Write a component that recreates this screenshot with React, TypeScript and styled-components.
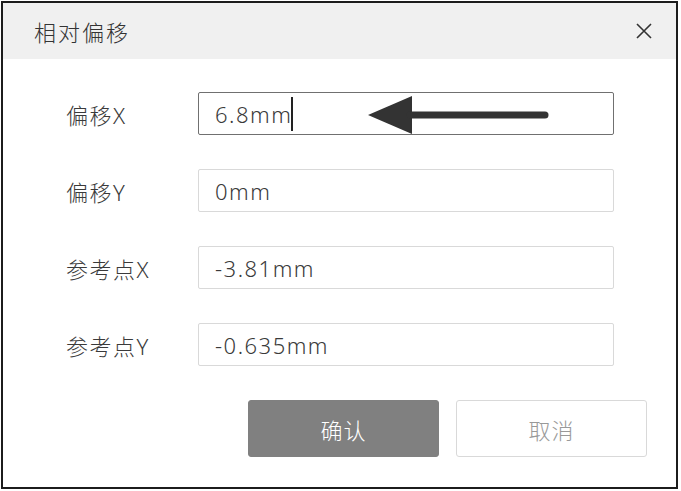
import React from 'react';
import styled, { createGlobalStyle } from 'styled-components';

const GlobalStyle = createGlobalStyle`
  html, body {
    margin: 0;
    padding: 0;
    background: #fff;
  }
  body {
    font-family: "Noto Sans", "Noto Sans CJK SC", sans-serif;
    color: #333;
  }
`;

const Frame = styled.div`
  box-sizing: border-box;
  width: 677px;
  height: 488px;
  margin: 1px 0 0 1px;
  border: 2px solid #1c1c1c;
  display: flex;
  flex-direction: column;
  background: #fff;
`;

const Header = styled.div`
  height: 56px;
  flex: none;
  background: #f0f0f0;
  display: flex;
  align-items: center;
  justify-content: space-between;
  padding: 0 24px 0 31px;
`;

const Title = styled.div`
  font-size: 22px;
  font-weight: 300;
  letter-spacing: 2px;
  color: #333;
`;

const Close = styled.button`
  width: 16px;
  height: 16px;
  padding: 0;
  border: 0;
  background: none;
  display: grid;
  place-content: center;
`;

const Body = styled.div`
  padding: 33px 29px 0 63px;
  display: flex;
  flex-direction: column;
`;

const Form = styled.div`
  display: grid;
  grid-template-columns: 132px 416px;
  grid-auto-rows: 43px;
  row-gap: 34px;
  align-items: center;
`;

const Label = styled.div`
  font-size: 22px;
  font-weight: 300;
  letter-spacing: 1.5px;
  color: #3a3a3a;
`;

const Field = styled.div<{ $focused?: boolean }>`
  position: relative;
  box-sizing: border-box;
  height: 43px;
  border: 1px solid ${(p) => (p.$focused ? '#707070' : '#d9d9d9')};
  border-radius: 2px;
  padding: 0 16px;
  display: flex;
  align-items: center;
  font-size: 22px;
  font-weight: 300;
  letter-spacing: 1.5px;
  color: #3a3a3a;
`;

const Caret = styled.span`
  display: inline-block;
  width: 2px;
  height: 34px;
  background: #222;
  margin-left: -1px;
`;

const Pointer = styled.svg`
  position: absolute;
  left: 168px;
  top: 0;
`;

const Actions = styled.div`
  margin-top: 34px;
  display: flex;
  justify-content: flex-end;
  gap: 17px;
`;

const Button = styled.button<{ $primary?: boolean }>`
  box-sizing: border-box;
  width: 191px;
  height: 57px;
  border-radius: 3px;
  border: 1px solid ${(p) => (p.$primary ? '#808080' : '#d9d9d9')};
  background: ${(p) => (p.$primary ? '#808080' : '#fff')};
  color: ${(p) => (p.$primary ? '#fff' : '#999')};
  font-family: "Noto Sans", "Noto Sans CJK SC", sans-serif;
  font-size: 22px;
  font-weight: 300;
  letter-spacing: 1px;
  padding: 0;
`;

const rows = [
  { label: '偏移X', value: '6.8mm', focused: true },
  { label: '偏移Y', value: '0mm' },
  { label: '参考点X', value: '-3.81mm' },
  { label: '参考点Y', value: '-0.635mm' },
];

export default function App() {
  return (
    <>
      <GlobalStyle />
      <Frame>
        <Header>
          <Title>相对偏移</Title>
          <Close aria-label="关闭">
            <svg width="16" height="16" viewBox="0 0 16 16">
              <path d="M1 1L15 15M15 1L1 15" stroke="#333" strokeWidth="1.6" />
            </svg>
          </Close>
        </Header>
        <Body>
          <Form>
            {rows.map((r) => (
              <React.Fragment key={r.label}>
                <Label>{r.label}</Label>
                <Field $focused={r.focused}>
                  <span>{r.value}</span>
                  {r.focused && <Caret />}
                  {r.focused && (
                    <Pointer width="185" height="43" viewBox="0 0 185 43">
                      <polygon points="1,22 45,3 45,41" fill="#333" />
                      <line x1="43" y1="22" x2="178" y2="22" stroke="#333" strokeWidth="7" strokeLinecap="round" />
                    </Pointer>
                  )}
                </Field>
              </React.Fragment>
            ))}
          </Form>
          <Actions>
            <Button $primary>确认</Button>
            <Button>取消</Button>
          </Actions>
        </Body>
      </Frame>
    </>
  );
}
